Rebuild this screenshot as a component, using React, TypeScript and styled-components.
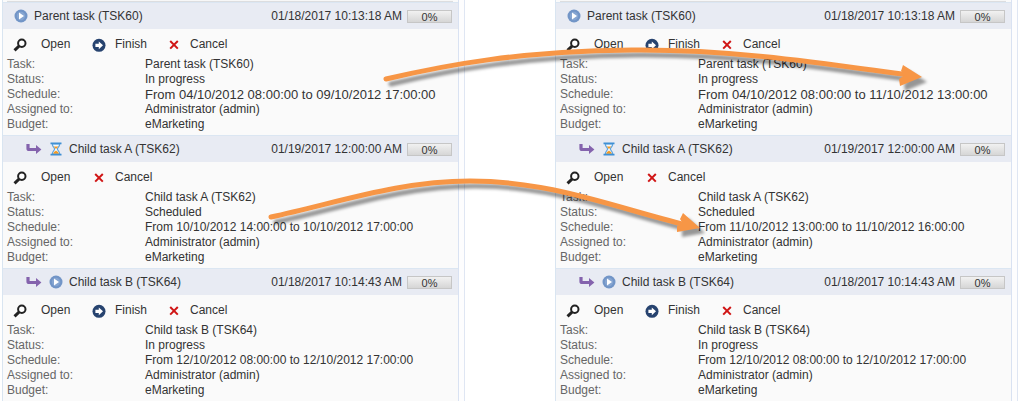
import React from "react";
import styled, { createGlobalStyle } from "styled-components";

const GlobalStyle = createGlobalStyle`
  body {
    margin: 0;
    background: #fff;
    color: #333;
    font-family: "Liberation Sans", Arial, sans-serif;
    font-size: 12px;
    line-height: 15px;
  }
`;

const Page = styled.main`
  position: relative;
  display: grid;
  grid-template-columns: 1fr 1fr;
  column-gap: 90px;
  padding: 0 3px 0 2px;
`;

const Panel = styled.section`
  padding-right: 5px;
  border-right: 1px solid #dfe6f3;
  background: #fdfdfe;
`;

const PanelBody = styled.div`
  border-left: 1px solid #d9e5f1;
  border-right: 1px solid #d9e2f2;
  background: #fafafa;
`;

const TopRule = styled.hr`
  height: 1px;
  margin: 0 5px 0 4px;
  border: 0;
  border-top: 1px solid #f7f7f7;
  background: #dcdddf;
`;

const TaskHeader = styled.header`
  display: flex;
  align-items: center;
  height: 26px;
  padding: 0 6px 0 11px;
  border-top: 1px solid #dbe6f2;
  background: #e8ebf3;
`;

const Nesting = styled.span`
  display: flex;
  flex: none;
  width: 16px;
  margin: 0 7px 0 12px;
`;

const StatusIcon = styled.span`
  display: flex;
  width: 14px;
  margin-right: 6px;
`;

const Title = styled.h2`
  flex: 1;
  margin: 0;
  font-size: 12px;
  font-weight: 400;
`;

const Progress = styled.div`
  width: 43px;
  height: 11px;
  margin-left: 5px;
  border: 1px solid #c6c6c6;
  background: linear-gradient(#f1f1f1, #d6d6d6);
  font-size: 11px;
  line-height: 12px;
  text-align: center;
`;

const Actions = styled.div`
  display: grid;
  grid-template-columns: 79px 75px auto;
  align-items: center;
  height: 28px;
  padding: 3px 0 0 10px;
  box-sizing: border-box;
`;

const Action = styled.button<{ $wide?: boolean }>`
  display: flex;
  align-items: center;
  gap: ${(p) => (p.$wide ? 14 : 9)}px;
  padding: 0;
  border: 0;
  background: none;
  color: inherit;
  font: inherit;
  cursor: pointer;
`;

const Details = styled.dl`
  display: grid;
  grid-template-columns: 138px 1fr;
  margin: 0;
  padding: 0 4px 3px;
`;

const Label = styled.dt`
  color: #666;
`;

const Value = styled.dd<{ $large?: boolean }>`
  margin: 0;
  white-space: nowrap;
  font-size: ${(p) => (p.$large ? 13 : 12)}px;
`;

const Overlay = styled.svg`
  position: absolute;
  inset: 0;
  width: 100%;
  height: 100%;
  pointer-events: none;
`;

const PlayIcon = () => (
  <svg width="14" height="14" viewBox="0 0 14 14">
    <circle cx="7" cy="7" r="6.5" fill="#7295c7" />
    <circle cx="7" cy="7" r="4.2" fill="#86a5d1" />
    <path d="M5 3.6 10 7 5 10.4Z" fill="#fff" />
  </svg>
);

const HourglassIcon = () => (
  <svg width="14" height="14" viewBox="0 0 14 14">
    <path d="M3.3 2C3.3 5 5.6 5.6 5.6 7S3.3 9 3.3 12H10.7C10.700 9 8.4 8.4 8.4 7S10.7 5 10.7 2Z" fill="#f4f8fc" stroke="#5ea5df" strokeWidth="1.2" />
    <path d="M4.6 4.4H9.400L7 7ZM4.1 11.8C4.400 9.8 6 9.3 7 8.4 8 9.300 9.6 9.8 9.900 11.8Z" fill="#f59b22" />
    <path d="M1.500 1.400H12.5M1.500 12.600H12.5" stroke="#3f8fd4" strokeWidth="1.800" />
  </svg>
);

const ChildIcon = () => (
  <svg width="16" height="12" viewBox="0 0 16 12">
    <path d="M2 1V5.500Q2 6.500 3.200 6.500H11" fill="none" stroke="#8463ad" strokeWidth="3.200" />
    <path d="M10 2 15.400 6.500 10 11Z" fill="#8463ad" />
  </svg>
);

const SearchIcon = () => (
  <svg width="14" height="14" viewBox="0 0 14 14">
    <circle cx="8.800" cy="5.200" r="3.700" fill="#fff" stroke="#222" strokeWidth="2" />
    <path d="M6 8.200 1.500 12.300" stroke="#222" strokeWidth="3" />
  </svg>
);

const FinishIcon = () => (
  <svg width="14" height="14" viewBox="0 0 14 14">
    <circle cx="7" cy="7.300" r="6.500" fill="#27436f" />
    <path d="M3.400 5.700H6.800V3.400L11 7.300 6.800 11.200V8.900H3.400Z" fill="#fff" />
  </svg>
);

const CancelIcon = () => (
  <svg width="14" height="14" viewBox="0 0 14 14">
    <path d="M3.200 3 10.800 10.600M10.800 3 3.200 10.600" stroke="#d01515" strokeWidth="2" />
  </svg>
);

type Task = {
  title: string;
  date: string;
  child?: boolean;
  running: boolean;
  schedule: string;
  large?: boolean;
};

const tasks = (parent: string, childA: string): Task[] => [
  { title: "Parent task (TSK60)", date: "01/18/2017 10:13:18 AM", running: true, schedule: parent, large: true },
  { title: "Child task A (TSK62)", date: "01/19/2017 12:00:00 AM", child: true, running: false, schedule: childA },
  {
    title: "Child task B (TSK64)",
    date: "01/18/2017 10:14:43 AM",
    child: true,
    running: true,
    schedule: "From 12/10/2012 08:00:00 to 12/10/2012 17:00:00",
  },
];

const before = tasks(
  "From 04/10/2012 08:00:00 to 09/10/2012 17:00:00",
  "From 10/10/2012 14:00:00 to 10/10/2012 17:00:00"
);
const after = tasks(
  "From 04/10/2012 08:00:00 to 11/10/2012 13:00:00",
  "From 11/10/2012 13:00:00 to 11/10/2012 16:00:00"
);

const TaskCard = ({ task }: { task: Task }) => (
  <article>
    <TaskHeader>
      {task.child && (
        <Nesting>
          <ChildIcon />
        </Nesting>
      )}
      <StatusIcon>{task.running ? <PlayIcon /> : <HourglassIcon />}</StatusIcon>
      <Title>{task.title}</Title>
      <time>{task.date}</time>
      <Progress role="progressbar" aria-label="Progress" aria-valuenow={0}>
        0%
      </Progress>
    </TaskHeader>
    <Actions>
      <Action type="button" $wide>
        <SearchIcon />
        Open
      </Action>
      {task.running && (
        <Action type="button">
          <FinishIcon />
          Finish
        </Action>
      )}
      <Action type="button">
        <CancelIcon />
        Cancel
      </Action>
    </Actions>
    <Details>
      <Label>Task:</Label>
      <Value>{task.title}</Value>
      <Label>Status:</Label>
      <Value>{task.running ? "In progress" : "Scheduled"}</Value>
      <Label>Schedule:</Label>
      <Value $large={task.large}>{task.schedule}</Value>
      <Label>Assigned to:</Label>
      <Value>Administrator (admin)</Value>
      <Label>Budget:</Label>
      <Value>eMarketing</Value>
    </Details>
  </article>
);

const TaskPanel = ({ items }: { items: Task[] }) => (
  <Panel>
    <PanelBody>
      <TopRule />
      {items.map((task) => (
        <TaskCard key={task.title} task={task} />
      ))}
    </PanelBody>
  </Panel>
);

const Arrows = () => (
  <Overlay viewBox="0 0 1021 401" preserveAspectRatio="none" aria-hidden="true">
    <defs>
      <filter id="shadow" x="-5%" y="-30%" width="110%" height="180%" colorInterpolationFilters="sRGB">
        <feDropShadow dx="5" dy="5" stdDeviation="1.8" floodColor="#000" floodOpacity="0.4" />
      </filter>
    </defs>
    <g fill="none" stroke="#f79646" strokeWidth="5" strokeLinecap="round" filter="url(#shadow)">
      <path d="M386 79C446 65 520 51 632 50C740 49 840 66 908 75" />
      <path d="M922 77 903 65 901 71 905 75 899 79 900 86Z" fill="#f79646" stroke="none" />
    </g>
    <g fill="none" stroke="#f79646" strokeWidth="5" strokeLinecap="round" filter="url(#shadow)">
      <path d="M271 217C340 202 400 181 470 181C550 181 610 206 686 225" />
      <path d="M700 228 683 213 680 219 683 224 677 226 677 232Z" fill="#f79646" stroke="none" />
    </g>
  </Overlay>
);

export default function App() {
  return (
    <>
      <GlobalStyle />
      <Page>
        <TaskPanel items={before} />
        <TaskPanel items={after} />
        <Arrows />
      </Page>
    </>
  );
}
